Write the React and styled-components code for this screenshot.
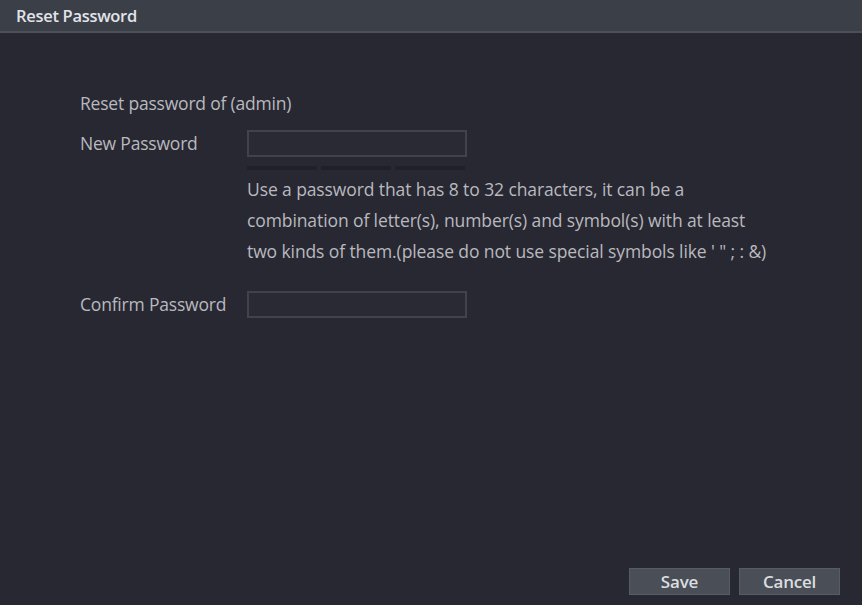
import React from "react";
import styled, { createGlobalStyle } from "styled-components";

const Global = createGlobalStyle`
  html, body { margin: 0; padding: 0; background: #282832; }
  body { font-family: "Open Sans", "Noto Sans", sans-serif; }
`;

const Dialog = styled.div`
  width: 862px;
  height: 605px;
  display: flex;
  flex-direction: column;
  background: #282832;
  box-sizing: border-box;
`;

const TitleBar = styled.div`
  height: 31px;
  flex: none;
  background: #3a3f48;
  border-bottom: 2px solid #4c5159;
  display: flex;
  align-items: center;
  padding-left: 16px;
  color: #e2e4e8;
  font-size: 16.5px;
  font-weight: 600;
  letter-spacing: -0.3px;
`;

const Body = styled.div`
  flex: 1;
  display: flex;
  flex-direction: column;
  padding: 58px 0 0 80px;
  color: #b9b9bf;
  font-size: 17.5px;
  letter-spacing: -0.2px;
`;

const Heading = styled.div`
  height: 24px;
  line-height: 24px;
  margin-bottom: 15px;
`;

const Row = styled.div`
  display: grid;
  grid-template-columns: 167px auto;
  align-items: start;
  margin-top: ${(p) => p.$mt || 0}px;
`;

const Label = styled.div`
  line-height: 24px;
  padding-top: 1px;
`;

const Field = styled.div`
  display: flex;
  flex-direction: column;
`;

const Input = styled.div`
  width: 220px;
  height: 27px;
  box-sizing: border-box;
  border: 2px solid #42424c;
  background: #2a2a34;
`;

const Strength = styled.div`
  display: flex;
  gap: 4px;
  width: 218px;
  margin-top: 9px;
  height: 4px;
`;

const Seg = styled.div`
  flex: 1;
  background: #20202a;
`;

const Help = styled.div`
  margin-top: 4px;
  line-height: 31px;
  width: 600px;
  letter-spacing: -0.1px;
`;

const Footer = styled.div`
  display: flex;
  justify-content: flex-end;
  gap: 9px;
  padding: 0 22px 10px 0;
  margin-top: auto;
`;

const Button = styled.button`
  width: 101px;
  height: 27px;
  background: #4a4f57;
  border: 1px solid #575c64;
  color: #dcdde0;
  font-family: "Open Sans", "Noto Sans", sans-serif;
  font-size: 17px;
  font-weight: 600;
  letter-spacing: -0.2px;
  padding: 0;
`;

export default function App() {
  return (
    <>
      <Global />
      <Dialog>
        <TitleBar>Reset Password</TitleBar>
        <Body>
          <Heading>Reset password of (admin)</Heading>
          <Row>
            <Label>New Password</Label>
            <Field>
              <Input />
              <Strength>
                <Seg />
                <Seg />
                <Seg />
              </Strength>
              <Help>
                Use a password that has 8 to 32 characters, it can be a
                <br />
                combination of letter(s), number(s) and symbol(s) with at least
                <br />
                two kinds of them.(please do not use special symbols like ' " ; : &amp;)
              </Help>
            </Field>
          </Row>
          <Row $mt={24}>
            <Label>Confirm Password</Label>
            <Field>
              <Input />
            </Field>
          </Row>
        </Body>
        <Footer>
          <Button>Save</Button>
          <Button>Cancel</Button>
        </Footer>
      </Dialog>
    </>
  );
}
